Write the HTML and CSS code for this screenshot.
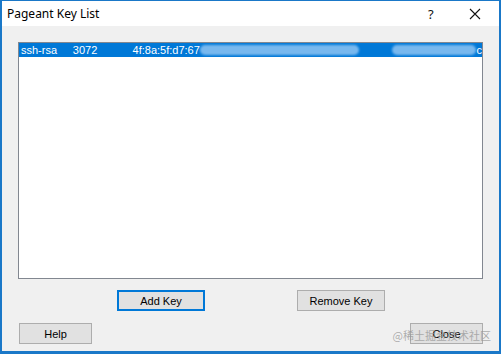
FILE: index.html
```html
<!DOCTYPE html>
<html lang="en">
<head>
  <meta charset="UTF-8" />
  <title>Pageant Key List</title>
  <link rel="stylesheet" href="styles.css">
</head>
<body>

  <div class="window">
    <div class="titlebar">
      <span class="title">Pageant Key List</span>
      <span class="help-btn">?</span>
      <span class="close-btn">
        <svg width="12" height="12" viewBox="0 0 12 12">
          <path d="M1 1 L11 11 M11 1 L1 11" stroke="#111" stroke-width="1.1" fill="none" />
        </svg>
      </span>
    </div>

    <div class="client">
      <div class="keylist">
        <div class="key-row selected">
          <span class="col-type">ssh-rsa</span>
          <span class="col-bits">3072</span>
          <span class="col-fp">4f:8a:5f:d7:67</span>
          <span class="blur blur-a"></span>
          <span class="blur blur-b"></span>
          <span class="col-end">c</span>
        </div>
      </div>

      <div class="row-mid">
        <button class="btn default">Add Key</button>
        <button class="btn">Remove Key</button>
      </div>

      <div class="row-bottom">
        <button class="btn">Help</button>
        <button class="btn">Close</button>
      </div>

      <span class="watermark">@稀土掘金技术社区</span>
    </div>
  </div>

</body>
</html>
```

FILE: styles.css
```css
* { margin: 0; padding: 0; box-sizing: border-box; }
body {
  font-family: "Liberation Sans", Arial, sans-serif;
  background-color: #ffffff;
}
.window {
  width: 501px;
  height: 354px;
  border: 2px solid #1a78c8;
  border-top-width: 1px;
  border-bottom-width: 3px;
  display: flex;
  flex-direction: column;
}
.titlebar {
  height: 25px;
  background-color: #ffffff;
  display: flex;
  align-items: center;
  padding-left: 5px;
}
.titlebar .title {
  font-family: "Noto Sans", "DejaVu Sans", sans-serif;
  font-size: 12px;
  color: #000;
  flex: 1;
}
.titlebar .help-btn {
  font-family: "Noto Sans", sans-serif;
  font-size: 13px;
  color: #111;
  width: 14px;
  margin-right: 27px;
}
.titlebar .close-btn {
  width: 12px;
  height: 12px;
  margin-right: 18px;
  display: flex;
}
.client {
  flex: 1;
  background-color: #f0f0f0;
  position: relative;
  padding: 16px 0 0 16px;
}
.keylist {
  width: 465px;
  height: 237px;
  background-color: #ffffff;
  border: 1px solid #828790;
}
.key-row {
  height: 14px;
  display: flex;
  align-items: center;
  font-size: 11px;
  color: #fff;
  white-space: nowrap;
}
.key-row.selected {
  background-color: #0078d7;
}
.col-type { width: 54px; padding-left: 2px; }
.col-bits { width: 60px; }
.col-fp { width: 67px; }
.blur {
  height: 10px;
  border-radius: 5px;
  background-color: #78b8ee;
  filter: blur(1px);
}
.blur-a { width: 160px; }
.blur-b { width: 84px; margin-left: 33px; }
.col-end { margin-left: 1px; }
.row-mid {
  display: flex;
  gap: 92px;
  margin: 11px 0 0 99px;
}
.row-bottom {
  display: flex;
  justify-content: space-between;
  margin: 12px 0 0 1px;
  width: 464px;
}
.btn {
  height: 21px;
  width: 88px;
  font-family: "Liberation Sans", Arial, sans-serif;
  font-size: 11px;
  color: #000;
  background-color: #e1e1e1;
  border: 1px solid #adadad;
}
.row-bottom .btn {
  width: 73px;
}
.btn.default {
  border: 2px solid #0078d7;
}
.watermark {
  position: absolute;
  right: 8px;
  bottom: 8px;
  font-family: "Noto Sans CJK SC", sans-serif;
  font-size: 11px;
  color: rgba(150, 150, 150, 0.75);
}
```
